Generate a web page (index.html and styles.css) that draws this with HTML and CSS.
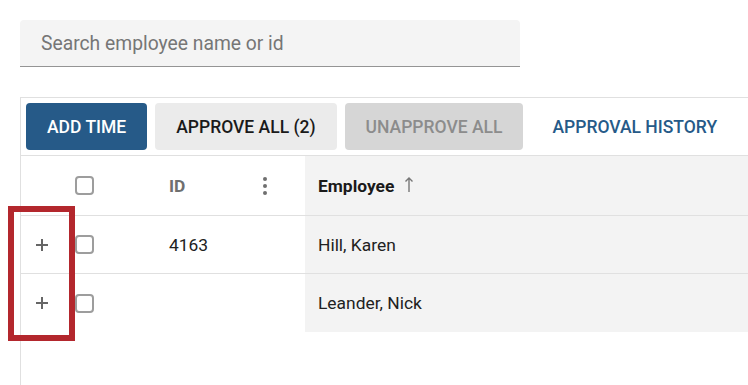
FILE: index.html
```html
<!DOCTYPE html>
<html lang="en">
<head>
    <meta charset="UTF-8">
    <meta name="viewport" content="width=device-width, initial-scale=1.0">
    <title>Timesheet Approval</title>
    <link rel="stylesheet" href="styles.css">
</head>
<body>
    <div class="page">
        <div class="search">
            <input type="text" placeholder="Search employee name or id">
        </div>

        <div class="grid">
            <!-- Toolbar -->
            <div class="toolbar">
                <button class="btn btn-primary">ADD TIME</button>
                <button class="btn btn-light">APPROVE ALL (2)</button>
                <button class="btn btn-disabled">UNAPPROVE ALL</button>
                <button class="btn btn-text">APPROVAL HISTORY</button>
            </div>

            <!-- Header -->
            <div class="row header">
                <div class="cell"></div>
                <div class="cell"><span class="check"></span></div>
                <div class="cell cell-id">
                    <span>ID</span>
                    <span class="kebab"><i></i><i></i><i></i></span>
                </div>
                <div class="cell cell-name">
                    <span>Employee</span>
                    <svg class="sort" width="10" height="17" viewBox="0 0 10 17">
                        <path d="M5 16V2M1.5 5.5L5 2l3.5 3.5" fill="none" stroke="#777" stroke-width="1.4"/>
                    </svg>
                </div>
            </div>

            <div class="row">
                <div class="cell"><span class="plus"></span></div>
                <div class="cell"><span class="check"></span></div>
                <div class="cell cell-id">4163</div>
                <div class="cell cell-name">Hill, Karen</div>
            </div>

            <div class="row last">
                <div class="cell"><span class="plus"></span></div>
                <div class="cell"><span class="check"></span></div>
                <div class="cell cell-id"></div>
                <div class="cell cell-name">Leander, Nick</div>
            </div>

            <!-- highlight around the expand buttons -->
            <div class="highlight"></div>
        </div>
    </div>
</body>
</html>
```

FILE: styles.css
```css
html, body {
    margin: 0;
    padding: 0;
    height: 100%;
    overflow: hidden;
    background: #fff;
}

body {
    font-family: Roboto, "Liberation Sans", Arial, sans-serif;
    color: #212121;
}

.page {
    padding: 20px 0 0 20px;
    height: 100%;
    box-sizing: border-box;
    display: flex;
    flex-direction: column;
}

.search {
    width: 500px;
    height: 47px;
    background: #f4f4f4;
    border-radius: 4px 4px 0 0;
    border-bottom: 1px solid #949494;
    box-sizing: border-box;
}

.search input {
    width: 100%;
    height: 100%;
    border: none;
    background: transparent;
    padding: 0 21px;
    box-sizing: border-box;
    font-family: inherit;
    font-size: 19.3px;
    color: #212121;
    outline: none;
}

.search input::placeholder {
    color: #767676;
}

.grid {
    position: relative;
    margin-top: 30px;
    flex: 1;
    border-left: 1px solid #e0e0e0;
    border-top: 1px solid #e0e0e0;
}

.toolbar {
    display: flex;
    align-items: center;
    gap: 8px;
    padding: 5px;
    border-bottom: 1px solid #e0e0e0;
    overflow: hidden;
}

.btn {
    flex-shrink: 0;
    height: 47px;
    padding: 0 21px;
    border: none;
    border-radius: 4px;
    font-family: inherit;
    font-size: 17.5px;
    font-weight: 500;
    white-space: nowrap;
    cursor: pointer;
}

.btn-primary {
    background: #265a88;
    color: #fff;
}

.btn-light {
    background: #ebebeb;
    color: #1a1a1a;
}

.btn-disabled {
    background: #d6d6d6;
    color: #8c8c8c;
    cursor: default;
}

.btn-text {
    background: transparent;
    color: #265a88;
    padding: 0 21px;
}

.row {
    display: grid;
    grid-template-columns: 41px 93px 150px 1fr;
    height: 58px;
}

.header {
    height: 60px;
}

.cell {
    display: flex;
    align-items: center;
    border-bottom: 1px solid #e0e0e0;
    font-size: 17.4px;
}

.row.last .cell {
    border-bottom: none;
}

.cell:nth-child(1) {
    justify-content: center;
}

.cell:nth-child(2) {
    padding-left: 13px;
}

.cell-id {
    padding-left: 14px;
}

.cell-name {
    background: #f3f3f3;
    padding-left: 13px;
}

.header .cell {
    font-weight: 700;
}

.header .cell-id {
    color: #6f6f6f;
    justify-content: space-between;
    padding-right: 38px;
}

.header .cell-name span {
    color: #1a1a1a;
}

.sort {
    margin-left: 10px;
    margin-top: -2px;
}

.kebab {
    display: flex;
    flex-direction: column;
    gap: 3px;
}

.kebab i {
    display: block;
    width: 4px;
    height: 4px;
    border-radius: 50%;
    background: #6f6f6f;
}

.check {
    display: block;
    width: 19px;
    height: 19px;
    border: 2px solid #9d9d9d;
    border-radius: 4px;
    box-sizing: border-box;
}

.plus {
    position: relative;
    display: block;
    width: 12px;
    height: 12px;
    margin-left: 1px;
}

.plus::before,
.plus::after {
    content: "";
    position: absolute;
    background: #666;
}

.plus::before {
    left: 0;
    top: 5px;
    width: 12px;
    height: 2px;
}

.plus::after {
    left: 5px;
    top: 0;
    width: 2px;
    height: 12px;
}

.highlight {
    position: absolute;
    left: -13px;
    top: 108px;
    width: 67px;
    height: 135px;
    border: 6px solid #b3272d;
    box-sizing: border-box;
}
```
